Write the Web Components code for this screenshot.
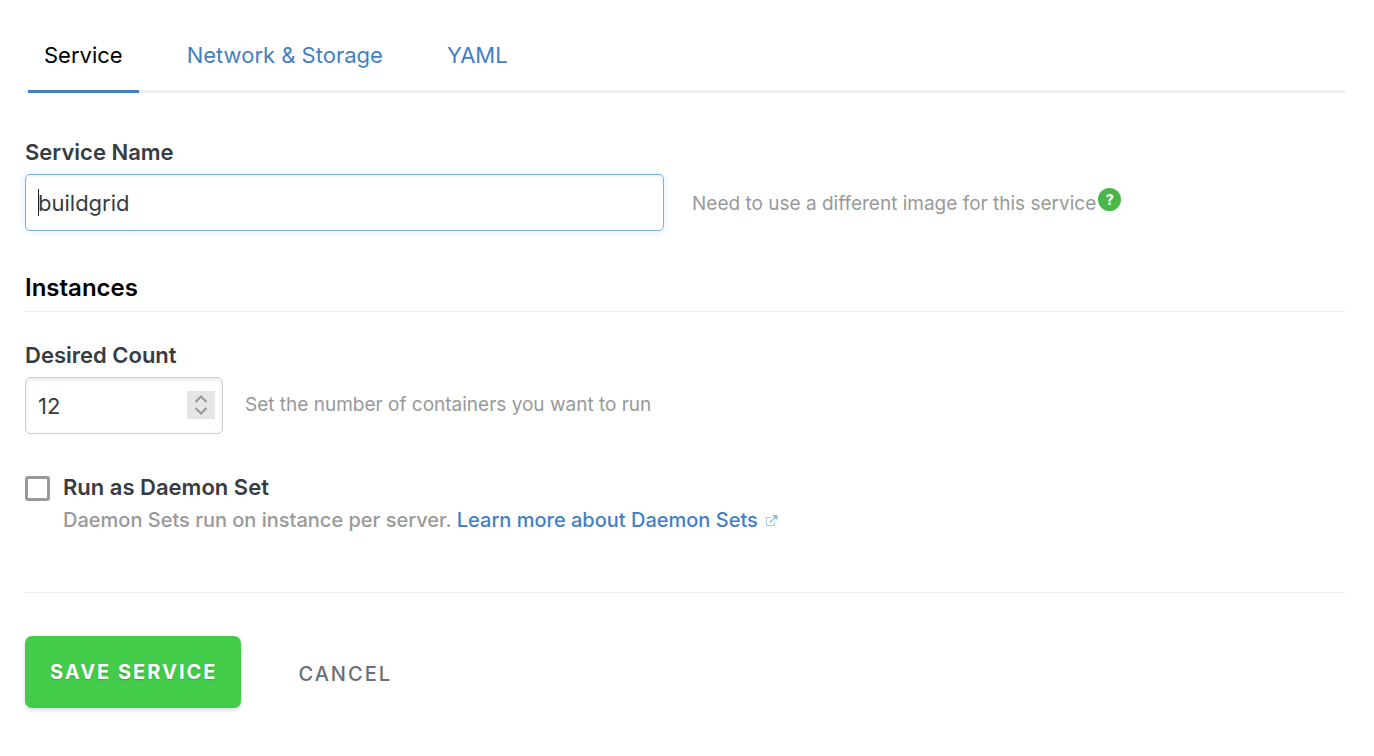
<!DOCTYPE html>
<html lang="en">
<head>
<meta charset="utf-8">
<meta name="viewport" content="width=device-width, initial-scale=1">
<title>Service</title>
<style>
  body {
    margin: 0;
    background: #fff;
    color: #363c44;
    font: 22px/30px Inter, "Liberation Sans", sans-serif;
    --blue: #427fc6;
    --muted: #999;
    --line: #eee;
  }
</style>
</head>
<body>
<service-form>
  <tab-bar slot="tabs">
    <tab-link href="#service" active>Service</tab-link>
    <tab-link href="#network">Network &amp; Storage</tab-link>
    <tab-link href="#yaml">YAML</tab-link>
  </tab-bar>

  <text-field label="Service Name" value="buildgrid">
    Need to use a different image for this service<help-badge></help-badge>
  </text-field>

  <section-title>Instances</section-title>

  <count-field label="Desired Count" value="12">Set the number of containers you want to run</count-field>

  <check-field label="Run as Daemon Set">
    Daemon Sets run on instance per server.
    <external-link href="#daemon-sets">Learn more about Daemon Sets</external-link>
  </check-field>

  <action-button slot="actions" variant="primary">SAVE SERVICE</action-button>
  <action-button slot="actions" variant="plain">CANCEL</action-button>
</service-form>

<script>
// Small base class: every element here just fills an open shadow root.
class BaseElement extends HTMLElement {
  constructor() {
    super();
    this.attachShadow({ mode: 'open' });
  }

  connectedCallback() {
    this.shadowRoot.innerHTML = this.template();
  }
}

// Shared look of the text and number inputs
const inputStyles = `
  :host { display: block; }
  label {
    display: block;
    margin-bottom: 7px;
    font-weight: 600;
  }
  .row { display: flex; align-items: center; }
  input {
    display: block;
    box-sizing: border-box;
    width: 100%;
    height: 57px;
    margin: 0;
    padding: 0 12px;
    border: 1px solid #c9cfd4;
    border-radius: 5px;
    background-color: #fff;
    box-shadow: inset 0 2px 4px rgba(40, 50, 70, 0.1);
    color: inherit;
    font: inherit;
    outline: none;
  }
  .hint { color: var(--muted); font-size: 19px; }
`;

class ServiceForm extends BaseElement {
  template() {
    return `
      <style>
        :host { display: block; padding: 24px 29px 24px 25px; }
        form { margin-top: 44px; }
        footer {
          display: flex;
          align-items: center;
          gap: 57px;
          margin-top: 57px;
          padding-top: 43px;
          border-top: 1px solid var(--line);
        }
      </style>
      <slot name="tabs"></slot>
      <form>
        <slot></slot>
        <footer><slot name="actions"></slot></footer>
      </form>
    `;
  }
}

class TabBar extends BaseElement {
  template() {
    return `
      <style>
        :host { display: block; }
        nav {
          display: flex;
          gap: 32px;
          padding-left: 3px;
          box-shadow: inset 0 -3px var(--line);
        }
      </style>
      <nav><slot></slot></nav>
    `;
  }
}

class TabLink extends BaseElement {
  template() {
    return `
      <style>
        :host { display: block; }
        a {
          display: block;
          padding: 16px 16px 20px;
          border-bottom: 3px solid transparent;
          color: var(--blue);
          text-decoration: none;
        }
        :host([active]) a { border-color: var(--blue); color: #000; }
      </style>
      <a href="${this.getAttribute('href')}"><slot></slot></a>
    `;
  }
}

class TextField extends BaseElement {
  template() {
    return `
      <style>
        ${inputStyles}
        .row { gap: 28px; }
        .box { flex: 0 0 639px; }
        input {
          border-color: #74b2e8;
          background: linear-gradient(#222, #222) 12px center / 1px 27px no-repeat #fff;
          box-shadow: inset 0 2px 3px rgba(40, 50, 70, 0.06), 0 0 8px rgba(70, 150, 230, 0.2);
        }
        .hint { padding-top: 2px; }
      </style>
      <label for="field">${this.getAttribute('label')}</label>
      <div class="row">
        <div class="box"><input id="field" type="text" value="${this.getAttribute('value')}"></div>
        <div class="hint"><slot></slot></div>
      </div>
    `;
  }
}

class HelpBadge extends BaseElement {
  template() {
    return `
      <style>
        :host { display: inline-block; margin-left: 2px; vertical-align: 5px; line-height: 0; }
        button {
          width: 23px;
          height: 23px;
          padding: 0;
          border: 0;
          border-radius: 50%;
          background: #47b749;
          color: #fff;
          font: 800 14px/23px Inter, sans-serif;
        }
      </style>
      <button type="button" aria-label="Help">?</button>
    `;
  }
}

class SectionTitle extends BaseElement {
  template() {
    return `
      <style>
        :host { display: block; margin: 42px 0 28px; }
        h2 {
          margin: 0;
          padding-bottom: 8px;
          border-bottom: 1px solid var(--line);
          color: #000;
          font-size: 24px;
          font-weight: 600;
        }
      </style>
      <h2><slot></slot></h2>
    `;
  }
}

class CountField extends BaseElement {
  connectedCallback() {
    super.connectedCallback();
    const input = this.shadowRoot.querySelector('input');
    this.shadowRoot.querySelector('.up').addEventListener('click', () => input.stepUp());
    this.shadowRoot.querySelector('.down').addEventListener('click', () => input.stepDown());
  }

  template() {
    return `
      <style>
        ${inputStyles}
        .row { gap: 22px; }
        .box { position: relative; flex: 0 0 198px; }
        input { appearance: textfield; }
        input::-webkit-inner-spin-button { appearance: none; }
        /* stepper sits over the right end of the input */
        .stepper {
          position: absolute;
          top: 14px;
          right: 8px;
          display: grid;
          grid-template-rows: 14px 14px;
          width: 28px;
          background: #e6e6e7;
        }
        button { padding: 0; border: 0; background: none; }
        svg { display: block; margin: auto; }
        .hint { padding-bottom: 2px; }
      </style>
      <label for="count">${this.getAttribute('label')}</label>
      <div class="row">
        <div class="box">
          <input id="count" type="number" min="0" value="${this.getAttribute('value')}">
          <div class="stepper">
            <button class="up" type="button" aria-label="Increase">
              <svg width="14" height="14" fill="none" stroke="#969696" stroke-width="2"><path d="M1.5 11 7 5.5 12.5 11"/></svg>
            </button>
            <button class="down" type="button" aria-label="Decrease">
              <svg width="14" height="14" fill="none" stroke="#969696" stroke-width="2"><path d="M1.5 3 7 8.5 12.5 3"/></svg>
            </button>
          </div>
        </div>
        <div class="hint"><slot></slot></div>
      </div>
    `;
  }
}

class CheckField extends BaseElement {
  template() {
    return `
      <style>
        :host {
          display: grid;
          grid-template-columns: 25px 1fr;
          column-gap: 13px;
          row-gap: 3px;
          margin-top: 38px;
        }
        input {
          appearance: none;
          width: 25px;
          height: 25px;
          margin: 4px 0 0;
          border: 3px solid #999;
          border-radius: 3px;
          background: #fff;
        }
        input:checked { background: var(--blue); }
        label { font-weight: 600; }
        .note { grid-column: 2; color: var(--muted); font-size: 20px; font-weight: 500; }
      </style>
      <input id="check" type="checkbox">
      <label for="check">${this.getAttribute('label')}</label>
      <div class="note"><slot></slot></div>
    `;
  }
}

class ExternalLink extends BaseElement {
  template() {
    return `
      <style>
        :host { display: inline; font-weight: 500; }
        a { color: var(--blue); text-decoration: none; }
        svg { margin-left: 7px; }
      </style>
      <a href="${this.getAttribute('href')}"><slot></slot><svg width="13" height="13" fill="none"><path d="M6 3.5H1.5V11.5H9.5V8" stroke="#a9c8e6"/><path d="M5 8.5 10.5 3" stroke="#8fc3ee" stroke-width="1.5"/><path d="M7 1H12.5V6.5Z" fill="#83bdec"/></svg></a>
    `;
  }
}

class ActionButton extends BaseElement {
  template() {
    return `
      <style>
        :host { display: block; }
        button {
          height: 72px;
          padding: 0;
          border: 0;
          border-radius: 7px;
          background: none;
          color: #6c6f73;
          font: inherit;
          font-size: 20px;
          font-weight: 500;
          letter-spacing: 2px;
          cursor: pointer;
        }
        :host([variant="plain"]) button { padding-top: 4px; }
        :host([variant="primary"]) button {
          padding: 0 24px 0 25px;
          background: #43cc49;
          box-shadow: 0 2px 4px rgba(40, 50, 90, 0.18);
          color: #fff;
          font-weight: 700;
          text-shadow: 0 1px 2px rgba(0, 0, 0, 0.2);
        }
      </style>
      <button type="button"><slot></slot></button>
    `;
  }
}

customElements.define('service-form', ServiceForm);
customElements.define('tab-bar', TabBar);
customElements.define('tab-link', TabLink);
customElements.define('text-field', TextField);
customElements.define('help-badge', HelpBadge);
customElements.define('section-title', SectionTitle);
customElements.define('count-field', CountField);
customElements.define('check-field', CheckField);
customElements.define('external-link', ExternalLink);
customElements.define('action-button', ActionButton);
</script>
</body>
</html>
